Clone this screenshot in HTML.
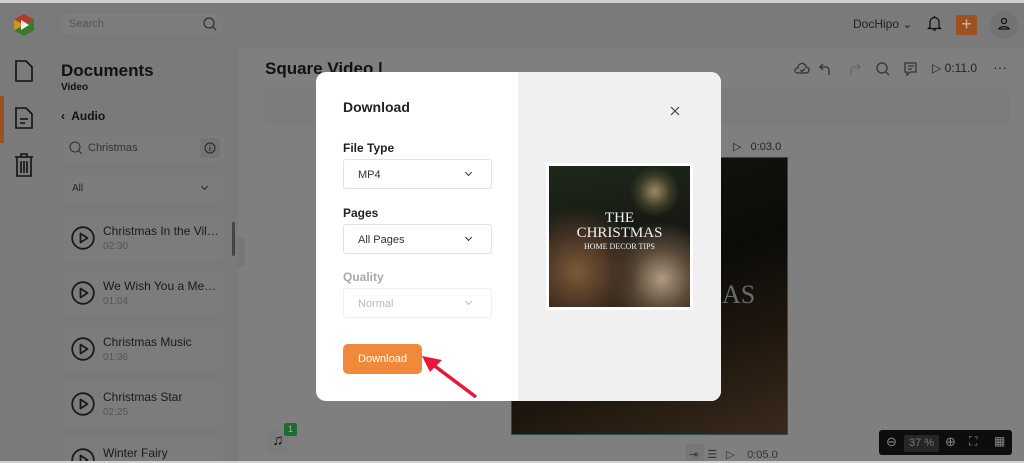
<!DOCTYPE html>
<html><head><meta charset="utf-8"><style>
*{box-sizing:border-box;margin:0;padding:0}
html,body{width:1024px;height:463px;overflow:hidden}
body{background:#7f7f7f;font-family:"Liberation Sans",sans-serif;position:relative;color:#111}
.a{position:absolute}
.card{position:absolute;left:62px;width:162px;height:46px;background:#7c7c7c;border-radius:6px;overflow:hidden}
.card .t{position:absolute;left:41px;top:9px;width:116px;font-size:12px;color:#1a1a1a;white-space:nowrap;overflow:hidden;text-overflow:ellipsis}
.card .d{position:absolute;left:41px;top:26px;font-size:10px;color:#555}
.card svg{position:absolute;left:9px;top:11px}
.sel{position:absolute;left:343px;width:149px;height:30px;border:1px solid #e2e2e2;border-radius:3px;font-size:11px;color:#333;padding:9px 0 0 14px}
.lbl{position:absolute;left:343px;font-size:12px;font-weight:bold;color:#222}
.chev{position:absolute;right:20px;top:10px;width:5px;height:5px;border-right:1.2px solid #333;border-bottom:1.2px solid #333;transform:rotate(45deg)}
</style></head><body>
<div class="a" style="left:0;top:0;width:1024px;height:3px;background:#d0d0d0"></div>
<div class="a" style="left:0;top:3px;width:1024px;height:45px;background:#7a7a7a"></div>
<svg class="a" style="left:12px;top:13px" width="24" height="24" viewBox="0 0 24 24"><path d="M12 1 L22 6.5 L22 17.5 L12 23 L2 17.5 L2 6.5Z" fill="#3a7a2a"/><path d="M12 1 L22 6.5 L12 12 L2 6.5Z" fill="#b33a2a"/><path d="M2 6.5 L12 12 L2 17.5Z" fill="#c89820"/><path d="M9 7 L17 12 L9 17Z" fill="#f0f0f0"/></svg>
<div class="a" style="left:58px;top:12px;width:168px;height:25px;border-radius:13px;background:#7d7d7d;border:1px solid #777"></div>
<div class="a" style="left:69px;top:18px;font-size:11px;color:#555">Search</div>
<svg class="a" style="left:203px;top:17px" width="14" height="14" viewBox="0 0 14 14"><circle cx="6" cy="6" r="5" fill="none" stroke="#333" stroke-width="1.3"/><path d="M10 10 L13 13" stroke="#333" stroke-width="1.3"/></svg>
<div class="a" style="left:853px;top:17px;font-size:12px;color:#222">DocHipo ⌄</div>
<svg class="a" style="left:927px;top:15px" width="15" height="17" viewBox="0 0 15 17"><path d="M7.5 1v1.5M3 12V7a4.5 4.5 0 0 1 9 0v5l1.5 1.5h-12Z M6 15h3" fill="none" stroke="#111" stroke-width="1.3"/></svg>
<div class="a" style="left:956px;top:15px;width:21px;height:20px;background:#9a5320;border-radius:2px;color:#d8b49a;font-size:18px;text-align:center;line-height:19px">+</div>
<div class="a" style="left:990px;top:11px;width:28px;height:28px;border-radius:50%;background:#737373"></div>
<svg class="a" style="left:997px;top:17px" width="14" height="14" viewBox="0 0 14 14"><circle cx="7" cy="4" r="2.5" fill="none" stroke="#111" stroke-width="1.3"/><path d="M2 12c0-3 10-3 10 0Z" fill="none" stroke="#111" stroke-width="1.3"/></svg>
<div class="a" style="left:0;top:48px;width:48px;height:413px;background:#7b7b7b"></div>
<div class="a" style="left:0;top:96px;width:4px;height:47px;background:#9a5320"></div>
<svg class="a" style="left:13px;top:60px" width="22" height="22" viewBox="0 0 22 22"><path d="M3 1h10l6 6v14H3Z" fill="none" stroke="#111" stroke-width="1.6"/></svg>
<svg class="a" style="left:13px;top:107px" width="22" height="22" viewBox="0 0 22 22"><path d="M3 1h10l6 6v14H3Z M7 12h8M7 16h5" fill="none" stroke="#111" stroke-width="1.6"/></svg>
<svg class="a" style="left:13px;top:153px" width="22" height="24" viewBox="0 0 22 24"><path d="M2 4h18M8 4V1h6v3M4 4v19h14V4M8 8v12M11 8v12M14 8v12" fill="none" stroke="#111" stroke-width="1.6"/></svg>
<div class="a" style="left:48px;top:48px;width:190px;height:413px;background:#7a7a7a"></div>
<div class="a" style="left:61px;top:61px;font-size:17px;font-weight:bold;color:#111">Documents</div>
<div class="a" style="left:61px;top:82px;font-size:10px;font-weight:bold;color:#111">Video</div>
<div class="a" style="left:61px;top:109px;font-size:12px;font-weight:bold;color:#111">‹&nbsp; Audio</div>
<div class="a" style="left:62px;top:134px;width:162px;height:29px;background:#7c7c7c;border-radius:4px"></div>
<svg class="a" style="left:69px;top:141px" width="14" height="14" viewBox="0 0 14 14"><circle cx="6" cy="6" r="5" fill="none" stroke="#333" stroke-width="1.1"/><path d="M10 10 L13 13" stroke="#333" stroke-width="1.1"/></svg>
<div class="a" style="left:88px;top:142px;font-size:11px;color:#333">Christmas</div>
<div class="a" style="left:200px;top:138px;width:20px;height:20px;background:#747474;border-radius:3px"></div>
<svg class="a" style="left:204px;top:142px" width="12" height="12" viewBox="0 0 12 12"><circle cx="6" cy="6" r="5" fill="none" stroke="#222"/><path d="M6 5v4M6 3v1" stroke="#222"/></svg>
<div class="a" style="left:62px;top:174px;width:162px;height:29px;background:#7c7c7c;border-radius:4px"></div>
<div class="a" style="left:72px;top:183px;font-size:10px;color:#222">All</div>
<div class="a" style="left:202px;top:184px;width:5px;height:5px;border-right:1.3px solid #222;border-bottom:1.3px solid #222;transform:rotate(45deg)"></div>
<div class="card" style="top:215px"><svg width="24" height="24" viewBox="0 0 24 24"><circle cx="12" cy="12" r="10.8" fill="none" stroke="#1a1a1a" stroke-width="1.8"/><path d="M9.5 7.5 L16.5 12 L9.5 16.5Z" fill="none" stroke="#1a1a1a" stroke-width="1.8" stroke-linejoin="round"/></svg><div class="t">Christmas In the Villa...</div><div class="d">02:30</div></div>
<div class="card" style="top:270px"><svg width="24" height="24" viewBox="0 0 24 24"><circle cx="12" cy="12" r="10.8" fill="none" stroke="#1a1a1a" stroke-width="1.8"/><path d="M9.5 7.5 L16.5 12 L9.5 16.5Z" fill="none" stroke="#1a1a1a" stroke-width="1.8" stroke-linejoin="round"/></svg><div class="t">We Wish You a Merry...</div><div class="d">01:04</div></div>
<div class="card" style="top:326px"><svg width="24" height="24" viewBox="0 0 24 24"><circle cx="12" cy="12" r="10.8" fill="none" stroke="#1a1a1a" stroke-width="1.8"/><path d="M9.5 7.5 L16.5 12 L9.5 16.5Z" fill="none" stroke="#1a1a1a" stroke-width="1.8" stroke-linejoin="round"/></svg><div class="t">Christmas Music</div><div class="d">01:36</div></div>
<div class="card" style="top:381px"><svg width="24" height="24" viewBox="0 0 24 24"><circle cx="12" cy="12" r="10.8" fill="none" stroke="#1a1a1a" stroke-width="1.8"/><path d="M9.5 7.5 L16.5 12 L9.5 16.5Z" fill="none" stroke="#1a1a1a" stroke-width="1.8" stroke-linejoin="round"/></svg><div class="t">Christmas Star</div><div class="d">02:25</div></div>
<div class="card" style="top:437px;height:24px"><svg width="24" height="24" viewBox="0 0 24 24"><circle cx="12" cy="12" r="10.8" fill="none" stroke="#1a1a1a" stroke-width="1.8"/><path d="M9.5 7.5 L16.5 12 L9.5 16.5Z" fill="none" stroke="#1a1a1a" stroke-width="1.8" stroke-linejoin="round"/></svg><div class="t">Winter Fairy</div></div>
<div class="a" style="left:232px;top:222px;width:3px;height:34px;background:#444;border-radius:2px"></div>
<div class="a" style="left:237px;top:237px;width:8px;height:30px;background:#777;border-radius:3px"></div>
<div class="a" style="left:265px;top:59px;font-size:17px;font-weight:bold;color:#111">Square Video |</div>
<div class="a" style="left:265px;top:89px;width:745px;height:36px;background:#7c7c7c;border-radius:5px"></div>
<svg class="a" style="left:793px;top:61px" width="130" height="16" viewBox="0 0 130 16" fill="none" stroke="#333" stroke-width="1.3"><path d="M4 12h9a3 3 0 0 0 0-6a4 4 0 0 0-8 1a2.5 2.5 0 0 0-1 5Z M7 9l2 1.5 3-3"/><path d="M36 14V9a3 3 0 0 0-3-3h-6M30 3l-3 3 3 3"/><path d="M58 14V9a3 3 0 0 1 3-3h6M64 3l3 3-3 3" stroke="#666"/><circle cx="89" cy="7" r="5"/><path d="M93 11l3 3"/><path d="M112 2h11v9h-6l-3 3v-3h-2Z M115 5h6M115 8h4"/></svg>
<div class="a" style="left:932px;top:61px;font-size:12px;color:#222">▷ 0:11.0</div>
<div class="a" style="left:993px;top:59px;font-size:14px;color:#222">···</div>
<div class="a" style="left:733px;top:140px;font-size:11px;color:#222">▷&nbsp;&nbsp; 0:03.0</div>
<div class="a" style="left:511px;top:157px;width:277px;height:278px;background:linear-gradient(160deg,#141811 0%,#0c0b08 45%,#1e160e 70%,#3a2a1c 100%);border:1px solid #2a4a55"></div>
<div class="a" style="left:722px;top:280px;font-size:26px;color:#6a6a6a;font-family:'Liberation Serif',serif">AS</div>
<div class="a" style="left:267px;top:429px;width:22px;height:24px;background:#7c7c7c;border-radius:4px;font-size:15px;text-align:center;line-height:24px">♫</div>
<div class="a" style="left:284px;top:423px;width:13px;height:13px;background:#1f6a35;border-radius:2px;color:#aaa;font-size:9px;text-align:center;line-height:13px">1</div>
<div class="a" style="left:686px;top:444px;width:18px;height:17px;background:#777"></div>
<div class="a" style="left:689px;top:448px;font-size:11px;color:#333;white-space:nowrap">⇥&nbsp;&nbsp; ☰&nbsp;&nbsp; ▷&nbsp;&nbsp;&nbsp; 0:05.0</div>
<div class="a" style="left:879px;top:430px;width:133px;height:25px;background:#0d0d0d;border-radius:3px"></div>
<div class="a" style="left:886px;top:434px;font-size:13px;color:#888">⊖</div>
<div class="a" style="left:904px;top:435px;width:35px;height:17px;background:#262626;border-radius:2px;color:#777;font-size:11px;text-align:center;line-height:17px">37 %</div>
<div class="a" style="left:945px;top:434px;font-size:13px;color:#888">⊕</div>
<div class="a" style="left:969px;top:434px;font-size:12px;color:#888">⛶</div>
<div class="a" style="left:994px;top:434px;font-size:12px;color:#888">▦</div>
<div class="a" style="left:0;top:461px;width:1024px;height:2px;background:#d0d0d0"></div>
<div class="a" style="left:316px;top:72px;width:405px;height:329px;background:#fff;border-radius:10px;overflow:hidden">
<div class="a" style="left:202px;top:0;width:203px;height:329px;background:#f0f0f0"></div>
</div>
<div class="a" style="left:343px;top:99px;font-size:14px;font-weight:bold;color:#222">Download</div>
<svg class="a" style="left:670px;top:106px" width="10" height="10" viewBox="0 0 10 10"><path d="M1 1L9 9M9 1L1 9" stroke="#444" stroke-width="1.2"/></svg>
<div class="lbl" style="top:141px">File Type</div>
<div class="sel" style="top:159px">MP4<div class="chev"></div></div>
<div class="lbl" style="top:206px">Pages</div>
<div class="sel" style="top:224px">All Pages<div class="chev"></div></div>
<div class="lbl" style="top:270px;color:#aaa">Quality</div>
<div class="sel" style="top:288px;color:#bbb;border-color:#f0f0f0">Normal<div class="chev" style="border-color:#bbb"></div></div>
<div class="a" style="left:343px;top:344px;width:79px;height:30px;background:#f08a3a;border-radius:5px;color:#fff;font-size:11px;text-align:center;line-height:30px">Download</div>
<svg class="a" style="left:418px;top:350px" width="62" height="50" viewBox="0 0 62 50"><path d="M58 47 L14 14" stroke="#e8163a" stroke-width="3.5"/><path d="M4 6 L24 10 L12 22Z" fill="#e8163a"/></svg>
<div class="a" style="left:546px;top:163px;width:147px;height:147px;background:#fff;border-radius:3px"></div>
<div class="a" style="left:549px;top:166px;width:141px;height:141px;background:radial-gradient(circle at 75% 18%,#a08a60 0,#3a3a28 10%,transparent 16%),radial-gradient(circle at 20% 75%,#7a5a38 0,#4a3525 22%,transparent 42%),radial-gradient(circle at 80% 80%,#b09a80 0,#5a4a3a 18%,transparent 36%),linear-gradient(170deg,#1e281a,#151712 55%,#22190f)"></div>
<div class="a" style="left:549px;top:211px;width:141px;text-align:center;color:#f2f2f2;font-family:'Liberation Serif',serif;line-height:1">
<div style="font-size:15px">THE</div><div style="font-size:15px">CHRISTMAS</div><div style="font-size:8px;margin-top:2px">HOME DECOR TIPS</div></div>
</body></html>
